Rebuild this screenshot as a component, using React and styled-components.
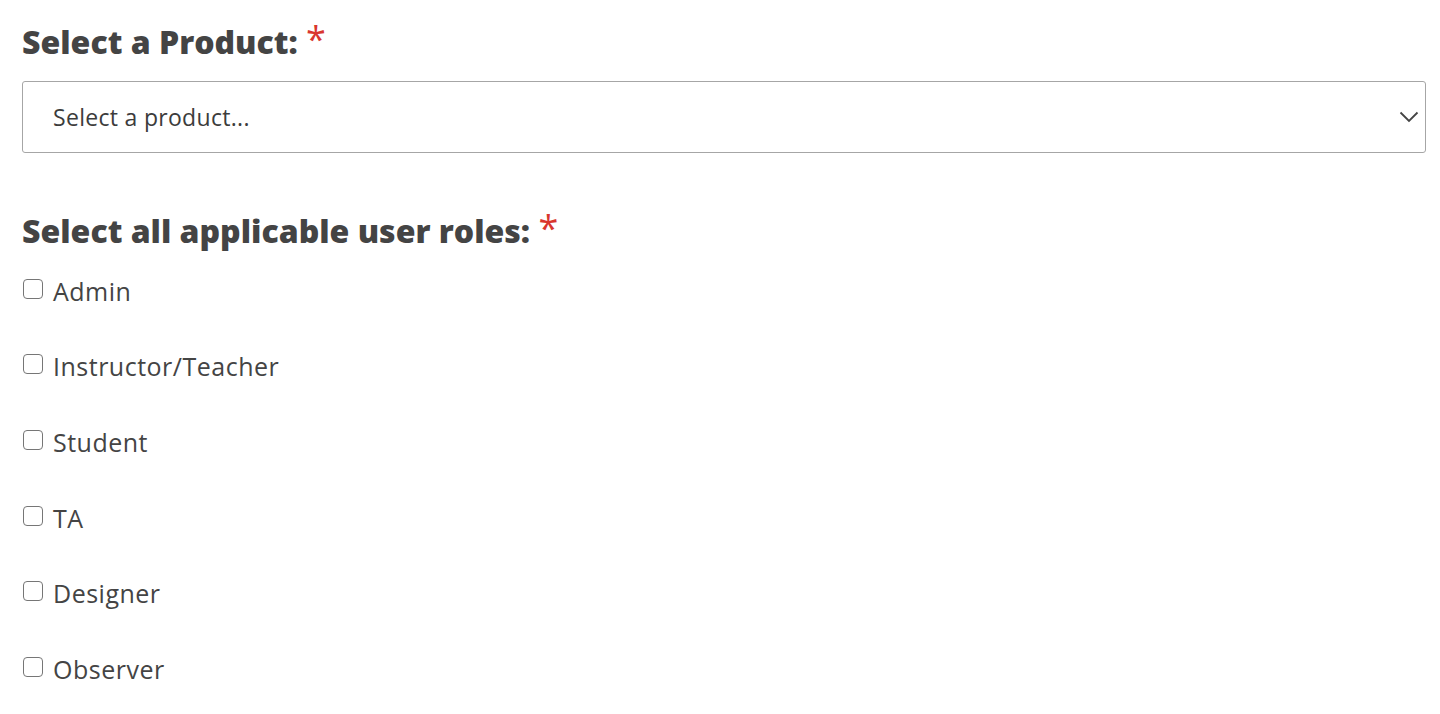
import React from "react";
import styled, { createGlobalStyle } from "styled-components";

const GlobalStyle = createGlobalStyle`
  body {
    margin: 0;
    background: #fff;
    font-family: "Open Sans", "Liberation Sans", sans-serif;
    color: #444;
  }
`;

const roles = ["Admin", "Instructor/Teacher", "Student", "TA", "Designer", "Observer"];

export default function App() {
  return (
    <Form>
      <GlobalStyle />
      <Field>
        <Label>
          Select a Product: <Required>*</Required>
        </Label>
        <SelectBox>
          <SelectText>Select a product...</SelectText>
          <Chevron viewBox="0 0 20 12">
            <path d="M1.5 1.5 L10 10 L18.5 1.5" fill="none" stroke="#444" strokeWidth="1.8" />
          </Chevron>
        </SelectBox>
      </Field>
      <RolesField>
        <Label>
          Select all applicable user roles: <Required>*</Required>
        </Label>
        <RoleList>
          {roles.map((role) => (
            <RoleRow key={role}>
              <Check type="checkbox" />
              <RoleName>{role}</RoleName>
            </RoleRow>
          ))}
        </RoleList>
      </RolesField>
    </Form>
  );
}

const Form = styled.div`
  padding: 16px 14px 0 22px;
  display: flex;
  flex-direction: column;
`;

const Field = styled.div`
  display: flex;
  flex-direction: column;
  gap: 16px;
`;

const RolesField = styled.div`
  display: flex;
  flex-direction: column;
  margin-top: 52px;
`;

const Label = styled.h2`
  margin: 0;
  font-size: 32px;
  font-weight: 800;
  line-height: 46px;
  color: #444;
`;

const Required = styled.span`
  color: #d9362e;
  font-weight: 400;
  font-size: 36px;
  vertical-align: 2px;
`;

const SelectBox = styled.div`
  height: 70px;
  border: 1px solid #a6a6a6;
  border-radius: 3px;
  display: flex;
  align-items: center;
  justify-content: space-between;
  padding: 0 6px 0 30px;
`;

const SelectText = styled.span`
  font-size: 23px;
  letter-spacing: 0.3px;
  color: #3c3c3c;
`;

const Chevron = styled.svg`
  width: 20px;
  height: 12px;
`;

const RoleList = styled.div`
  display: flex;
  flex-direction: column;
  gap: 30px;
  margin-top: 14px;
`;

const RoleRow = styled.label`
  display: flex;
  align-items: center;
  gap: 10px;
  height: 45.6px;
`;

const Check = styled.input`
  appearance: none;
  margin: 0 0 4px 1px;
  width: 20px;
  height: 20px;
  border: 1.5px solid #767676;
  border-radius: 4px;
  background: #fff;
  box-sizing: border-box;
`;

const RoleName = styled.span`
  font-size: 25px;
  letter-spacing: 0.5px;
  color: #444;
`;
